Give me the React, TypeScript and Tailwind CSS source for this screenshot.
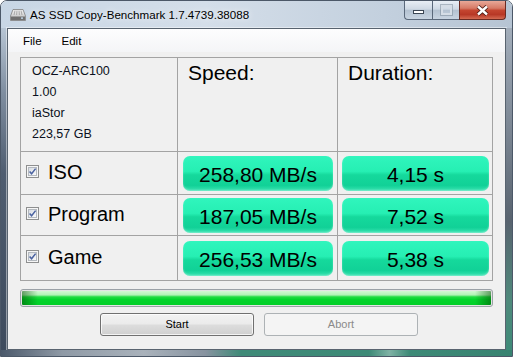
import React from "react";

const sans = "font-['Liberation_Sans',Arial,sans-serif]";

function DriveIcon() {
  return (
    <svg width="16" height="13" viewBox="0 0 16 13">
      <defs>
        <linearGradient id="drvg" x1="0" y1="0" x2="0" y2="1">
          <stop offset="0" stopColor="#f4f4f4" />
          <stop offset="1" stopColor="#b4b4b4" />
        </linearGradient>
      </defs>
      <path d="M3 1.5 H13 L15.5 8 V12.5 H0.5 V8 Z" fill="url(#drvg)" stroke="#808080" strokeWidth="0.8" />
      <path d="M5 2.5 L4 7 M7 2.5 L6.6 7 M9 2.5 L9.4 7 M11 2.5 L12 7" stroke="#9a9a9a" strokeWidth="0.8" />
      <rect x="1" y="8.5" width="14" height="3.5" fill="#707070" />
      <rect x="11" y="9.5" width="2" height="1.2" fill="#cfe8ff" />
    </svg>
  );
}

function Check() {
  return (
    <svg width="13" height="13" viewBox="0 0 13 13" className="shrink-0">
      <defs>
        <linearGradient id="cbg" x1="0" y1="0" x2="1" y2="1">
          <stop offset="0" stopColor="#d6dbe1" />
          <stop offset="1" stopColor="#fbfbfc" />
        </linearGradient>
      </defs>
      <rect x="0.5" y="0.5" width="12" height="12" fill="#f6f6f6" stroke="#8e8f8f" />
      <rect x="2.5" y="2.5" width="8" height="8" fill="url(#cbg)" stroke="#b4b9bf" />
      <path d="M3.6 6.4 L5.6 8.8 L9.6 3.6" fill="none" stroke="#4a62a0" strokeWidth="1.5" />
    </svg>
  );
}

function Val({ children }: { children: React.ReactNode }) {
  return (
    <div className="h-[35px] w-full rounded-[7px] flex items-center justify-center pt-[2px] text-[21px] leading-none text-black bg-[linear-gradient(to_bottom,#30f5bd_0%,#26efb3_44%,#15d99c_54%,#11d197_84%,#38e4b2_100%)] shadow-[inset_0_-1px_2px_rgba(255,255,255,0.35)]">
      {children}
    </div>
  );
}

function LabelCell({ text }: { text: string }) {
  return (
    <div className="bg-[#f0f0f0] flex items-center pl-[5px] pb-[3px] gap-[9px]">
      <Check />
      <span className="text-[20px] leading-none text-black">{text}</span>
    </div>
  );
}

function SpeedCell({ text }: { text: string }) {
  return (
    <div className="bg-[#f0f0f0] flex items-center pl-[5px] pr-[4px]">
      <Val>{text}</Val>
    </div>
  );
}

function DurCell({ text }: { text: string }) {
  return (
    <div className="bg-[#f0f0f0] flex items-center pl-[4px] pr-[3px]">
      <Val>{text}</Val>
    </div>
  );
}

export default function App() {
  return (
    <div className={`w-[513px] h-[357px] bg-white ${sans}`}>
      <div className="w-full h-full flex flex-col rounded-t-[7px] border border-[#4c5868] overflow-hidden">
        {/* Title bar */}
        <div className="h-[27px] shrink-0 flex items-start bg-[linear-gradient(to_right,#c8d6e5_0%,#d4dee9_40%,#c3d0de_75%,#b6c4d3_100%)]">
          <div className="pl-[9px] pt-[7px]">
            <DriveIcon />
          </div>
          <div className="ml-[4px] pt-[6px] text-[11.6px] leading-[15px] text-black whitespace-nowrap [text-shadow:0_0_6px_rgba(255,255,255,0.95)]">
            AS SSD Copy-Benchmark 1.7.4739.38088
          </div>
          <div className="ml-auto mr-[6px] flex h-[19px]">
            <div className="w-[28px] h-full rounded-bl-[4px] border border-t-0 border-r-0 border-[#5a687a] bg-[linear-gradient(to_bottom,#e8eef5_0%,#cfd9e4_45%,#b4c2d1_52%,#c8d4e1_100%)] flex items-end justify-center pb-[5px]">
              <div className="w-[11px] h-[4px] bg-white border border-[#3b4654]" />
            </div>
            <div className="w-[27px] h-full border-b border-l border-[#5a687a] bg-[linear-gradient(to_bottom,#e8eef5_0%,#cfd9e4_45%,#b4c2d1_52%,#c8d4e1_100%)] flex items-center justify-center">
              <div className="w-[11px] h-[10px] border-2 border-[#d5dde6] shadow-[0_0_0_1px_rgba(120,135,150,0.5)]" />
            </div>
            <div className="w-[47px] h-full rounded-br-[4px] border border-t-0 border-[#6a2a22] bg-[linear-gradient(to_bottom,#e8a898_0%,#d67a66_40%,#c44530_52%,#b83826_75%,#d46a52_100%)] flex items-center justify-center">
              <svg width="13" height="11" viewBox="0 0 13 11">
                <path d="M2 1.5 L11 9.5 M11 1.5 L2 9.5" stroke="#4a1d16" strokeWidth="4.2" />
                <path d="M2 1.5 L11 9.5 M11 1.5 L2 9.5" stroke="#ffffff" strokeWidth="2.4" />
              </svg>
            </div>
          </div>
        </div>

        {/* Middle: frame strips + client */}
        <div className="flex flex-1 min-h-0">
          <div className="w-[6px] shrink-0 bg-[linear-gradient(to_bottom,#b7c5d4_0%,#7f8ea0_20%,#4f5d70_45%,#3e4b5d_100%)]" />
          <div className="w-[499px] shrink-0 border border-[#58636f] bg-[#f0f0f0] flex flex-col shadow-[0_0_0_1px_rgba(255,255,255,0.45)]">
            {/* Menu bar */}
            <div className="h-[23px] shrink-0 flex items-center pl-[15px] pt-[2px] gap-[20px] text-[11.5px] text-black bg-[linear-gradient(to_bottom,#fdfdfe,#f4f5f7)]">
              <span>File</span>
              <span>Edit</span>
            </div>
            {/* Content */}
            <div className="px-[12px] pt-[5px] flex flex-col">
              <div className="grid grid-cols-[156px_159px_154px] grid-rows-[93px_42px_40px_44px] gap-px p-px bg-[#a3a3a3]">
                <div className="bg-[#f0f0f0] pl-[11px] pt-[3px] text-[12.5px] leading-[21px] text-[#0b1020]">
                  <div>OCZ-ARC100</div>
                  <div>1.00</div>
                  <div>iaStor</div>
                  <div>223,57 GB</div>
                </div>
                <div className="bg-[#f0f0f0] pl-[10px] pt-[3px] text-[21px] leading-[24px] text-black">Speed:</div>
                <div className="bg-[#f0f0f0] pl-[10px] pt-[3px] text-[21px] leading-[24px] text-black">Duration:</div>

                <LabelCell text="ISO" />
                <SpeedCell text="258,80 MB/s" />
                <DurCell text="4,15 s" />

                <LabelCell text="Program" />
                <SpeedCell text="187,05 MB/s" />
                <DurCell text="7,52 s" />

                <LabelCell text="Game" />
                <SpeedCell text="256,53 MB/s" />
                <DurCell text="5,38 s" />
              </div>

              {/* Progress bar */}
              <div className="mt-[8px] h-[18px] rounded-[3px] border border-[#9ba1a7] p-px bg-[#e4e4e4]">
                <div className="h-full w-full rounded-[1px] bg-[linear-gradient(to_right,rgba(0,70,0,0.5)_0px,rgba(0,70,0,0)_16px,rgba(0,70,0,0)_calc(100%-16px),rgba(0,70,0,0.5)_100%),linear-gradient(to_bottom,#d4f8d4_0%,#b2f2b6_28%,#22dc42_42%,#04d42c_60%,#02cf28_100%)]" />
              </div>

              {/* Buttons */}
              <div className="mt-[6px] flex gap-[10px] pl-[80px]">
                <div className="w-[154px] h-[23px] rounded-[3px] border border-[#707070] bg-[linear-gradient(to_bottom,#f2f2f2_0%,#ebebeb_48%,#dddddd_52%,#cfcfcf_100%)] shadow-[inset_0_0_0_1px_rgba(255,255,255,0.75)] flex items-center justify-center text-[11px] text-black">
                  Start
                </div>
                <div className="w-[154px] h-[23px] rounded-[3px] border border-[#adb2b5] bg-[#f4f4f4] flex items-center justify-center text-[11px] text-[#8a8a8a]">
                  Abort
                </div>
              </div>
            </div>
          </div>
          <div className="w-[6px] shrink-0 bg-[linear-gradient(to_bottom,#a3aebb_0%,#7d8895_30%,#58636f_60%,#4f8a7c_85%,#3f8a78_100%)]" />
        </div>

        {/* Bottom frame */}
        <div className="h-[6px] shrink-0 bg-[linear-gradient(to_right,#4b596b_0%,#8f9aa6_12%,#a9b2bb_28%,#8793a0_40%,#3f8a78_47%,#3d8a77_72%,#7fb2a5_76%,#3d8a77_80%,#388371_100%)]" />
      </div>
    </div>
  );
}
